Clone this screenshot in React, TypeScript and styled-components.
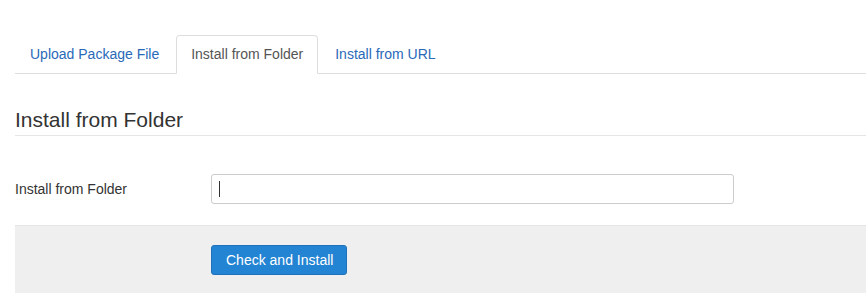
import React from "react";
import styled, { createGlobalStyle } from "styled-components";

const GlobalStyle = createGlobalStyle`
  html, body {
    margin: 0;
    padding: 0;
    background: #fff;
  }
  body {
    font-family: "Liberation Sans", Arial, sans-serif;
    font-size: 14px;
    line-height: 20px;
    color: #333;
  }
`;

const Page = styled.div`
  padding: 35px 0 0 15px;
`;

const TabList = styled.ul`
  list-style: none;
  margin: 0;
  padding: 0;
  display: flex;
  border-bottom: 1px solid #ddd;
`;

const TabItem = styled.li<{ $active?: boolean }>`
  margin: 0 2px -1px 0;
  padding: 8px 14px 9px;
  line-height: 20px;
  border: 1px solid ${(p) => (p.$active ? "#ddd" : "transparent")};
  border-bottom-color: ${(p) => (p.$active ? "#fff" : "transparent")};
  border-radius: 4px 4px 0 0;
  background: ${(p) => (p.$active ? "#fff" : "transparent")};
  color: ${(p) => (p.$active ? "#555" : "#2a69b8")};
  cursor: pointer;
`;

const Legend = styled.h3`
  margin: 31px 0 38px;
  font-size: 21px;
  font-weight: normal;
  line-height: 30px;
  color: #333;
  border-bottom: 1px solid #e5e5e5;
`;

const FieldRow = styled.div`
  display: flex;
  align-items: center;
`;

const Label = styled.label`
  width: 196px;
  flex: none;
  color: #333;
`;

const InputWrap = styled.div`
  position: relative;
`;

const TextInput = styled.input`
  box-sizing: border-box;
  width: 523px;
  height: 30px;
  padding: 4px 7px;
  border: 1px solid #ccc;
  border-radius: 3px;
  font: inherit;
  color: #555;
  outline: none;
  caret-color: transparent;
`;

const Caret = styled.span`
  position: absolute;
  left: 8px;
  top: 7px;
  width: 1px;
  height: 16px;
  background: #333;
`;

const Actions = styled.div`
  margin-top: 21px;
  padding: 19px 0 20px 196px;
  background: #efefef;
  border-top: 1px solid #e5e5e5;
`;

const PrimaryButton = styled.button`
  box-sizing: border-box;
  height: 30px;
  padding: 0 13px 0 14px;
  border: 1px solid #1f72ba;
  border-radius: 3px;
  background: #2384d3;
  color: #fff;
  font: inherit;
  line-height: 28px;
  cursor: pointer;
`;

const tabs = ["Upload Package File", "Install from Folder", "Install from URL"];

export default function App() {
  return (
    <>
      <GlobalStyle />
      <Page>
        <TabList>
          {tabs.map((t, i) => (
            <TabItem key={t} $active={i === 1}>
              {t}
            </TabItem>
          ))}
        </TabList>
        <Legend>Install from Folder</Legend>
        <FieldRow>
          <Label htmlFor="install_directory">Install from Folder</Label>
          <InputWrap>
            <TextInput id="install_directory" type="text" defaultValue="" />
            <Caret />
          </InputWrap>
        </FieldRow>
        <Actions>
          <PrimaryButton type="button">Check and Install</PrimaryButton>
        </Actions>
      </Page>
    </>
  );
}
